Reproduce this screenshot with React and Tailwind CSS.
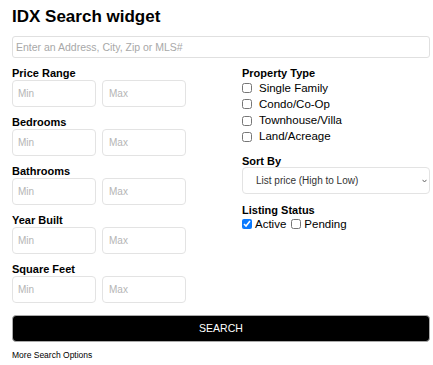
const font = { fontFamily: '"Liberation Sans", Arial, sans-serif' };

const RangeRow = ({ label }) => (
  <div className="mb-[9px]">
    <div className="text-[11px] font-bold leading-[13px] text-black">{label}</div>
    <div className="flex gap-[6px]">
      <input
        placeholder="Min"
        className="w-[84px] h-[27px] px-[5px] text-[10px] border border-[#e3e3e3] rounded-[4px] placeholder-[#b5b5b5] outline-none"
      />
      <input
        placeholder="Max"
        className="w-[84px] h-[27px] px-[6px] text-[10px] border border-[#e3e3e3] rounded-[4px] placeholder-[#b5b5b5] outline-none"
      />
    </div>
  </div>
);

const Check = ({ label, checked }) => (
  <label className="flex items-center h-[16.3px] text-[11.5px] text-black">
    <input type="checkbox" defaultChecked={checked} className="w-[10px] h-[10px] m-0 mr-[7px] accent-[#0a7aff]" />
    {label}
  </label>
);

const App = () => {
  return (
    <div className="w-[433px] h-[365px] bg-white pl-[12px] pr-[3px] pt-[5px]" style={font}>
      <h1 className="text-[17px] font-bold leading-[24px] text-black mb-[5px]">IDX Search widget</h1>
      <input
        placeholder="Enter an Address, City, Zip or MLS#"
        className="w-full h-[22px] px-[3px] text-[10.5px] border border-[#e0e0e0] rounded-[3px] placeholder-[#a8a8a8] outline-none"
      />

      <div className="grid grid-cols-[230px_1fr] mt-[9px]">
        <div>
          <RangeRow label="Price Range" />
          <RangeRow label="Bedrooms" />
          <RangeRow label="Bathrooms" />
          <RangeRow label="Year Built" />
          <RangeRow label="Square Feet" />
        </div>

        <div>
          <div className="text-[11px] font-bold leading-[13px] text-black">Property Type</div>
          <Check label="Single Family" />
          <Check label="Condo/Co-Op" />
          <Check label="Townhouse/Villa" />
          <Check label="Land/Acreage" />

          <div className="text-[11px] font-bold leading-[13px] text-black mt-[10px]">Sort By</div>
          <div className="relative mt-[-1px]">
            <select className="w-full h-[27px] pl-[13px] text-[10px] text-[#333] border border-[#e3e3e3] rounded-[4px] bg-white appearance-none outline-none">
              <option>List price (High to Low)</option>
            </select>
            <svg className="absolute right-[3px] top-[12px] w-[5px] h-[4px]" viewBox="0 0 5 4" fill="none">
              <path d="M0.5 0.8 L2.5 3 L4.5 0.8" stroke="#666" strokeWidth="1" />
            </svg>
          </div>

          <div className="text-[11px] font-bold leading-[13px] text-black mt-[10px]">Listing Status</div>
          <div className="flex items-center text-[11.5px] text-black h-[14px]">
            <input type="checkbox" defaultChecked className="w-[10px] h-[10px] m-0 mr-[3px] accent-[#0a7aff]" />
            <span className="mr-[5px]">Active</span>
            <input type="checkbox" className="w-[10px] h-[10px] m-0 mr-[3px]" />
            <span>Pending</span>
          </div>
        </div>
      </div>

      <button className="w-full h-[27px] mt-[3px] bg-black text-white text-[10.5px] rounded-[4px] border border-[#aaa]">
        SEARCH
      </button>
      <div className="text-[8.5px] leading-[11px] text-black mt-[8px]">More Search Options</div>
    </div>
  );
};

export default App;
